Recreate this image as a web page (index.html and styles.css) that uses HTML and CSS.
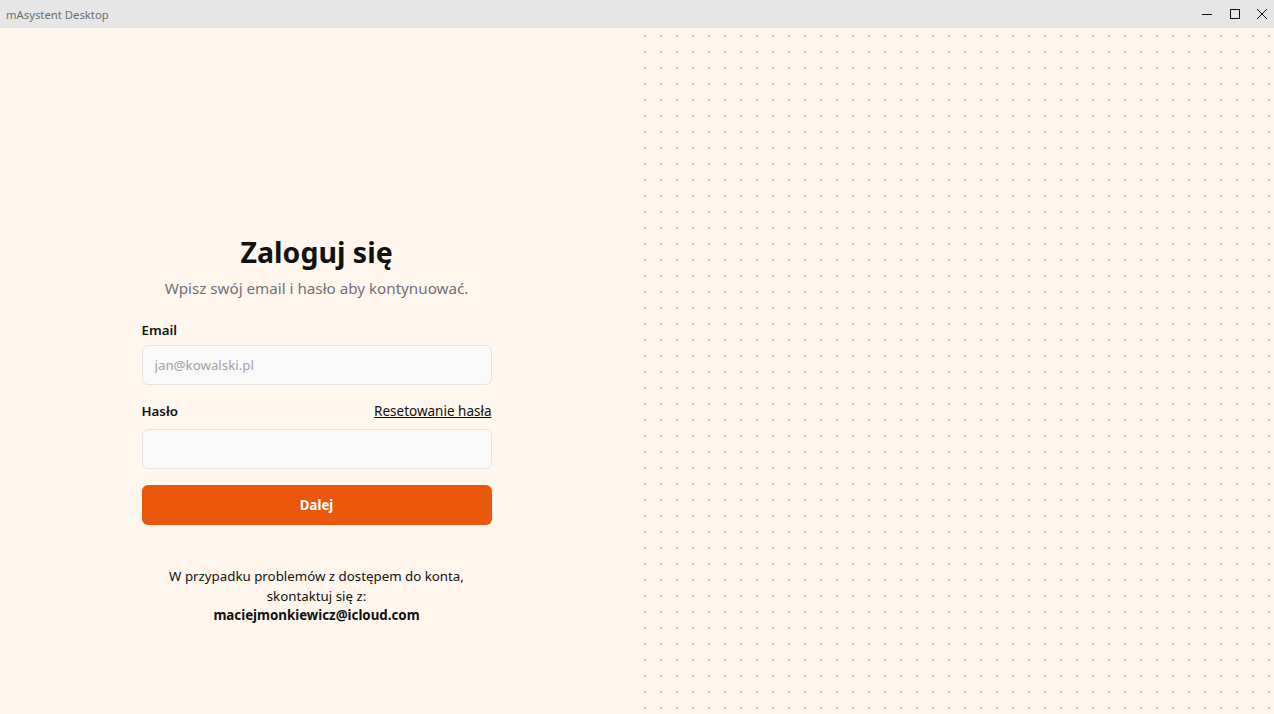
FILE: index.html
```html
<!DOCTYPE html>
<html lang="pl">
<head>
<meta charset="utf-8">
<title>mAsystent Desktop</title>
<link rel="stylesheet" href="styles.css">
</head>
<body>
<div class="window">
  <header class="titlebar">
    <span class="app-title">mAsystent Desktop</span>
    <div class="controls">
      <span class="ctl"><svg width="12" height="12" viewBox="0 0 12 12"><path d="M1 6.5h10" stroke="#111" stroke-width="1"/></svg></span>
      <span class="ctl"><svg width="12" height="12" viewBox="0 0 12 12"><rect x="1.5" y="1.5" width="9" height="9" fill="none" stroke="#111" stroke-width="1"/></svg></span>
      <span class="ctl"><svg width="12" height="12" viewBox="0 0 12 12"><path d="M1 1l10 10M11 1L1 11" stroke="#111" stroke-width="1"/></svg></span>
    </div>
  </header>
  <main class="main">
    <section class="left">
      <form class="form">
        <h1 class="title">Zaloguj się</h1>
        <p class="subtitle">Wpisz swój email i hasło aby kontynuować.</p>
        <div class="field field-email">
          <div class="label-row"><label class="label">Email</label></div>
          <input class="input" type="text" placeholder="jan@kowalski.pl">
        </div>
        <div class="field field-pass">
          <div class="label-row"><label class="label">Hasło</label><a class="link" href="#">Resetowanie hasła</a></div>
          <input class="input" type="password">
        </div>
        <button class="btn" type="button">Dalej</button>
        <p class="help">W przypadku problemów z dostępem do konta,<br>skontaktuj się z:<br><strong>maciejmonkiewicz@icloud.com</strong></p>
      </form>
    </section>
    <section class="right"></section>
  </main>
</div>
</body>
</html>
```
FILE: styles.css
```css
* { box-sizing: border-box; }
html, body { margin: 0; padding: 0; height: 100%; }
body { font-family: "Noto Sans", "Open Sans", sans-serif; color: #111; }
.window { display: flex; flex-direction: column; height: 714px; width: 1274px; }
.titlebar { height: 28px; background: #e6e6e6; display: flex; align-items: center; justify-content: space-between; flex-shrink: 0; }
.app-title { font-size: 11.3px; color: #6e6e6e; padding-left: 6px; }
.controls { display: flex; height: 100%; }
.ctl { width: 28px; display: flex; align-items: center; justify-content: center; }
.ctl:last-child { width: 25px; }
.main { flex: 1; display: flex; background: #fff6ed; }
.left { width: 637px; display: flex; justify-content: center; padding-top: 205px; }
.right { flex: 1; background-image: radial-gradient(circle at 8px 8px, #fdba74 1.1px, transparent 1.4px); background-size: 16px 16px; }
.form { width: 350px; margin-left: -4px; display: flex; flex-direction: column; }
.title { margin: 0; text-align: center; font-size: 28.5px; font-weight: 700; line-height: 38px; }
.subtitle { margin: 6px 0 0; text-align: center; font-size: 15.2px; color: #71717a; line-height: 22px; }
.field { display: flex; flex-direction: column; }
.label-row { display: flex; justify-content: space-between; align-items: baseline; height: 20px; }
.field-email { margin-top: 22px; }
.field-email .label-row { margin-bottom: 4px; }
.field-pass { margin-top: 17px; }
.field-pass .label-row { margin-bottom: 7px; }
.label { font-size: 13.3px; font-weight: 600; }
.link { font-size: 13.5px; color: #111; text-decoration: underline; }
.input { height: 40px; border: 1px solid #e4e4e7; background: #f9f9f9; border-radius: 6px; padding: 0 12px; font: inherit; font-size: 13.3px; outline: none; }
.input::placeholder { color: #a1a1aa; }
.btn { margin-top: 16px; height: 40px; border: none; border-radius: 6px; background: #ea580c; color: #fff; font: inherit; font-size: 13.3px; font-weight: 700; }
.help { margin: 42px 0 0; text-align: center; font-size: 13.3px; line-height: 19.5px; }
.help strong { font-weight: 700; }
```
